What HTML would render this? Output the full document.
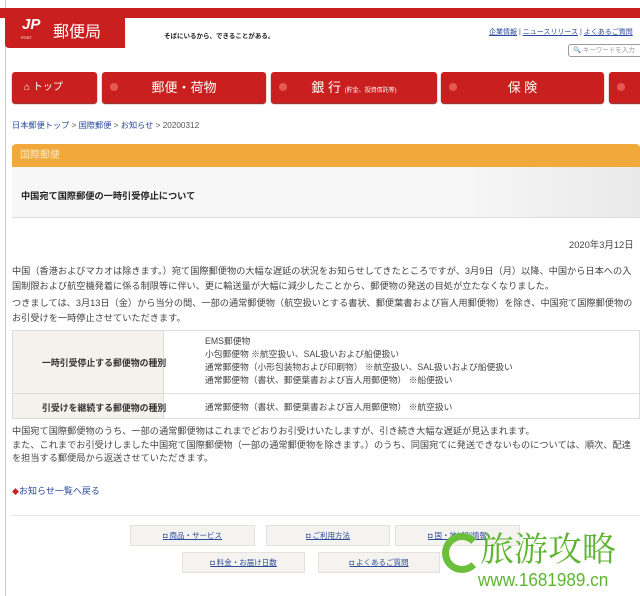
<!DOCTYPE html>
<html><head><meta charset="utf-8"><style>
*{margin:0;padding:0;box-sizing:border-box}
body{width:640px;height:596px;overflow:hidden;background:#fff;font-family:"Liberation Sans","Noto Sans CJK JP",sans-serif;color:#333;position:relative;font-size:8px}
.a{position:absolute;white-space:nowrap}
.nav{position:absolute;top:72px;height:31px;background:#c9201f;border-radius:3px;color:#fff;font-size:13px;line-height:31px;text-align:center;box-shadow:0 1px 1px #8a1010}
.nav i{position:absolute;left:8px;top:11px;width:8px;height:8px;border-radius:50%;background:#e35a55;font-style:normal}
.p{font-size:9.2px;color:#444;line-height:14.5px}
.t{font-size:8.75px;color:#444}
a{color:#2a4a9a}
.fb{position:absolute;height:21px;background:#f5f3f0;border:1px solid #e5e2dd;font-size:7.5px;line-height:20px;text-align:center;color:#2a4a9a;text-decoration:underline}
</style></head><body>
<div class="a" style="left:5px;top:0;width:1px;height:596px;background:#ccc"></div>
<div class="a" style="left:0;top:8px;width:640px;height:10px;background:#c9201f"></div>
<div class="a" style="left:5px;top:8px;width:120px;height:40px;background:#c9201f;border-radius:0 0 0 4px"></div>
<div class="a" style="left:110px;top:8px;width:0;height:0;border-top:40px solid #c9201f;border-right:15px solid transparent"></div>
<div class="a" style="left:22px;top:16px;color:#fff;font-size:15px;font-weight:bold;font-style:italic">JP</div>
<div class="a" style="left:21px;top:35px;color:#fff;font-size:4px">POST</div>
<div class="a" style="left:53px;top:18px;color:#fff;font-size:16px">郵便局</div>
<div class="a" style="left:164px;top:30px;font-size:6.5px;color:#222;font-weight:bold">そばにいるから、できることがある。</div>
<div class="a" style="left:489px;top:27px;font-size:7px;color:#2a4a9a"><u>企業情報</u> | <u>ニュースリリース</u> | <u>よくあるご質問</u></div>
<div class="a" style="left:568px;top:44px;width:80px;height:13px;border:1px solid #999;border-radius:3px;font-size:6.5px;color:#999;padding-left:4px;line-height:11px">🔍 キーワードを入力</div>
<div class="nav" style="left:12px;width:85px;text-align:left;padding-left:12px;font-size:10px">⌂ トップ</div>
<div class="nav" style="left:102px;width:164px"><i></i>郵便・荷物</div>
<div class="nav" style="left:271px;width:166px"><i></i>銀 行 <span style="font-size:6px">(貯金、投資信託等)</span></div>
<div class="nav" style="left:441px;width:163px"><i></i>保 険</div>
<div class="nav" style="left:609px;width:40px"><i></i></div>
<div class="a" style="left:12px;top:119px;font-size:8.2px;color:#555"><a>日本郵便トップ</a> &gt; <a>国際郵便</a> &gt; <a>お知らせ</a> &gt; 20200312</div>
<div class="a" style="left:12px;top:144px;width:628px;height:23px;background:#f0a93a;border-radius:4px 4px 0 0;color:#fde8c0;font-size:10px;line-height:23px;padding-left:8px">国際郵便</div>
<div class="a" style="left:12px;top:167px;width:628px;height:51px;background:linear-gradient(90deg,#f7f7f7 70%,#e9e9e9);border-bottom:1px solid #ddd"></div>
<div class="a" style="left:21px;top:188px;font-size:9.2px;color:#222;font-weight:bold">中国宛て国際郵便の一時引受停止について</div>
<div class="a" style="left:569px;top:237px;font-size:9.4px;color:#444">2020年3月12日</div>
<div class="a p" style="left:12px;top:264px">中国（香港およびマカオは除きます。）宛て国際郵便物の大幅な遅延の状況をお知らせしてきたところですが、3月9日（月）以降、中国から日本への入<br>国制限および航空機発着に係る制限等に伴い、更に輸送量が大幅に減少したことから、郵便物の発送の目処が立たなくなりました。</div>
<div class="a p" style="left:12px;top:296px">つきましては、3月13日（金）から当分の間、一部の通常郵便物（航空扱いとする書状、郵便葉書および盲人用郵便物）を除き、中国宛て国際郵便物の<br>お引受けを一時停止させていただきます。</div>
<div class="a" style="left:12px;top:330px;width:628px;height:89px;border:1px solid #ddd"></div>
<div class="a" style="left:13px;top:331px;width:150px;height:87px;background:#f5f2ec"></div>
<div class="a" style="left:13px;top:393px;width:627px;height:1px;background:#ddd"></div>
<div class="a" style="left:163px;top:331px;width:1px;height:87px;background:#ddd"></div>
<div class="a" style="left:42px;top:356px;font-size:8.9px;font-weight:bold;color:#333">一時引受停止する郵便物の種別</div>
<div class="a" style="left:42px;top:401px;font-size:8.9px;font-weight:bold;color:#333">引受けを継続する郵便物の種別</div>
<div class="a t" style="left:205px;top:335px;line-height:13px">EMS郵便物<br>小包郵便物 ※航空扱い、SAL扱いおよび船便扱い<br>通常郵便物（小形包装物および印刷物） ※航空扱い、SAL扱いおよび船便扱い<br>通常郵便物（書状、郵便葉書および盲人用郵便物） ※船便扱い</div>
<div class="a t" style="left:205px;top:400px">通常郵便物（書状、郵便葉書および盲人用郵便物） ※航空扱い</div>
<div class="a p" style="left:12px;top:425px;line-height:13.5px">中国宛て国際郵便物のうち、一部の通常郵便物はこれまでどおりお引受けいたしますが、引き続き大幅な遅延が見込まれます。<br>また、これまでお引受けしました中国宛て国際郵便物（一部の通常郵便物を除きます。）のうち、同国宛てに発送できないものについては、順次、配達<br>を担当する郵便局から返送させていただきます。</div>
<div class="a" style="left:12px;top:484px;font-size:9px"><span style="color:#c9201f;font-size:7px">◆</span><a>お知らせ一覧へ戻る</a></div>
<div class="a" style="left:12px;top:515px;width:628px;height:1px;background:#e5e5e5"></div>
<div class="fb" style="left:130px;top:525px;width:125px">◘ 商品・サービス</div>
<div class="fb" style="left:266px;top:525px;width:124px">◘ ご利用方法</div>
<div class="fb" style="left:395px;top:525px;width:125px">◘ 国・地域別情報</div>
<div class="fb" style="left:182px;top:552px;width:123px">◘ 料金・お届け日数</div>
<div class="fb" style="left:318px;top:552px;width:122px">◘ よくあるご質問</div>
<div class="a" style="left:442px;top:533px;width:40px;height:40px;border:7px solid #6cbf3a;border-right-color:transparent;border-radius:50%"></div>
<div class="a" style="left:480px;top:528px;font-size:34px;line-height:38px;color:#5db531;font-family:'Noto Serif CJK SC',serif">旅游攻略</div>
<div class="a" style="left:478px;top:570px;font-size:18px;line-height:20px;color:#5db531;transform:scaleX(0.95);transform-origin:left">www.1681989.cn</div>
</body></html>
